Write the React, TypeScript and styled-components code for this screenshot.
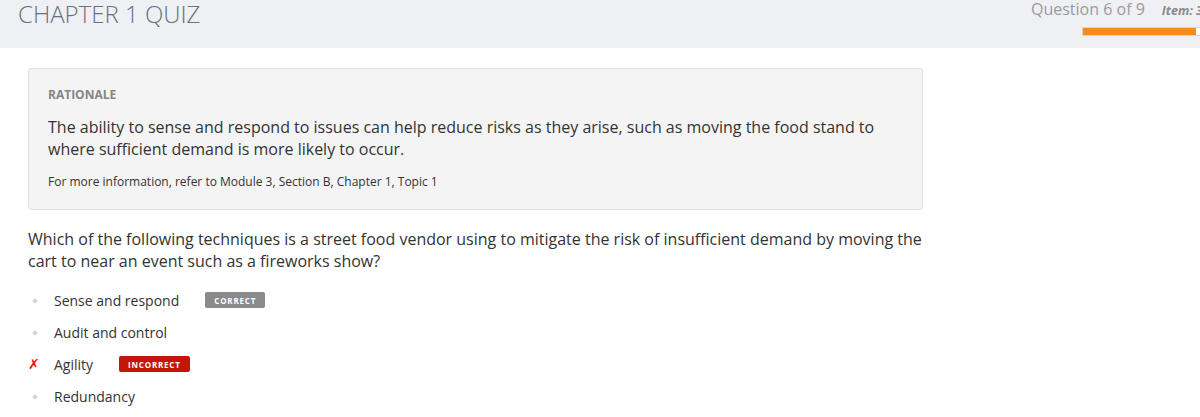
import React from "react";
import styled, { createGlobalStyle } from "styled-components";

const Global = createGlobalStyle`
  html, body { margin: 0; padding: 0; background: #ffffff; }
  body { font-family: "Open Sans", "Liberation Sans", sans-serif; color: #333; overflow: hidden; }
  * { box-sizing: border-box; }
`;

const Header = styled.header`
  display: flex;
  align-items: flex-start;
  height: 48px;
  background: #eff0f4;
  padding-left: 18px;
  overflow: hidden;
`;

const Title = styled.h1`
  flex: 1;
  margin: 0;
  font-size: 24px;
  line-height: 28px;
  font-weight: 300;
  color: #66707e;
  letter-spacing: 0;
`;

const Status = styled.div`
  display: flex;
  flex-direction: column;
  align-items: flex-end;
  width: 180px;
  margin-right: -11px;
  flex-shrink: 0;
`;

const StatusRow = styled.div`
  display: flex;
  align-items: baseline;
  gap: 17px;
  width: 100%;
  white-space: nowrap;
`;

const Counter = styled.span`
  font-size: 16px;
  line-height: 18px;
  color: #9b9b9b;
`;

const Item = styled.span`
  font-size: 12.5px;
  font-weight: 700;
  font-style: italic;
  color: #8a8a8a;
  white-space: nowrap;
`;

const Progress = styled.div`
  width: 129px;
  height: 9px;
  margin-top: 8px;
  border: 1px solid #d6d6d6;
  background: #ffffff;
  display: flex;
`;

const ProgressFill = styled.div`
  height: 100%;
  background: #f58c1e;
`;

const Main = styled.main`
  padding: 20px 0 0 28px;
  width: 923px;
`;

const Rationale = styled.section`
  background: #f4f4f4;
  border: 1px solid #e2e2e2;
  border-radius: 3px;
  padding: 20px 20px 19px 19px;
  height: 142px;
`;

const Label = styled.div`
  font-size: 12px;
  line-height: 12px;
  font-weight: 700;
  color: #858585;
  text-transform: uppercase;
`;

const Body = styled.p`
  margin: 15px 0 0;
  font-size: 16px;
  line-height: 22px;
  color: #333;
`;

const Note = styled.p`
  margin: 13px 0 0;
  font-size: 12px;
  line-height: 17px;
  color: #333;
`;

const Question = styled.p`
  margin: 18px 0 0;
  font-size: 16px;
  line-height: 22px;
  color: #333;
`;

const Options = styled.ul`
  list-style: none;
  margin: 18px 0 0;
  padding: 0;
  display: flex;
  flex-direction: column;
  gap: 12px;
`;

const Option = styled.li`
  display: flex;
  align-items: center;
  height: 20px;
  font-size: 14px;
  color: #333;
`;

const Marker = styled.span`
  width: 26px;
  display: flex;
  align-items: center;
  flex-shrink: 0;
`;

const Dot = styled.span`
  display: block;
  width: 4px;
  height: 4px;
  margin-left: 5px;
  margin-top: 1px;
  background: #d4d4d4;
  transform: rotate(45deg);
`;

const Cross = styled.span`
  font-family: "DejaVu Sans", sans-serif;
  color: #f01010;
  font-size: 14px;
  font-weight: 700;
  font-style: italic;
`;

const Badge = styled.span<{ $tone: "correct" | "incorrect" }>`
  margin-left: 26px;
  height: 16px;
  padding: 0 9px;
  display: inline-flex;
  align-items: center;
  border-radius: 2px;
  font-size: 8px;
  font-weight: 700;
  letter-spacing: 0.8px;
  color: #ffffff;
  background: ${(p) => (p.$tone === "correct" ? "#8a8a8a" : "#c3150b")};
`;

type Opt = { text: string; mark?: "wrong"; badge?: "correct" | "incorrect" };

const options: Opt[] = [
  { text: "Sense and respond", badge: "correct" },
  { text: "Audit and control" },
  { text: "Agility", mark: "wrong", badge: "incorrect" },
  { text: "Redundancy" },
];

export default function App() {
  return (
    <>
      <Global />
      <Header>
        <Title>CHAPTER 1 QUIZ</Title>
        <Status>
          <StatusRow>
            <Counter>Question 6 of 9</Counter>
            <Item>Item: 3</Item>
          </StatusRow>
          <Progress>
            <ProgressFill style={{ width: `${(113 / 127) * 100}%` }} />
          </Progress>
        </Status>
      </Header>
      <Main>
        <Rationale>
          <Label>Rationale</Label>
          <Body>
            The ability to sense and respond to issues can help reduce risks as they arise, such as moving the food stand to where sufficient demand is more likely to occur.
          </Body>
          <Note>For more information, refer to Module 3, Section B, Chapter 1, Topic 1</Note>
        </Rationale>
        <Question>
          Which of the following techniques is a street food vendor using to mitigate the risk of insufficient demand by moving the cart to near an event such as a fireworks show?
        </Question>
        <Options>
          {options.map((o) => (
            <Option key={o.text}>
              <Marker>{o.mark === "wrong" ? <Cross>✗</Cross> : <Dot />}</Marker>
              {o.text}
              {o.badge && (
                <Badge $tone={o.badge}>{o.badge === "correct" ? "CORRECT" : "INCORRECT"}</Badge>
              )}
            </Option>
          ))}
        </Options>
      </Main>
    </>
  );
}
